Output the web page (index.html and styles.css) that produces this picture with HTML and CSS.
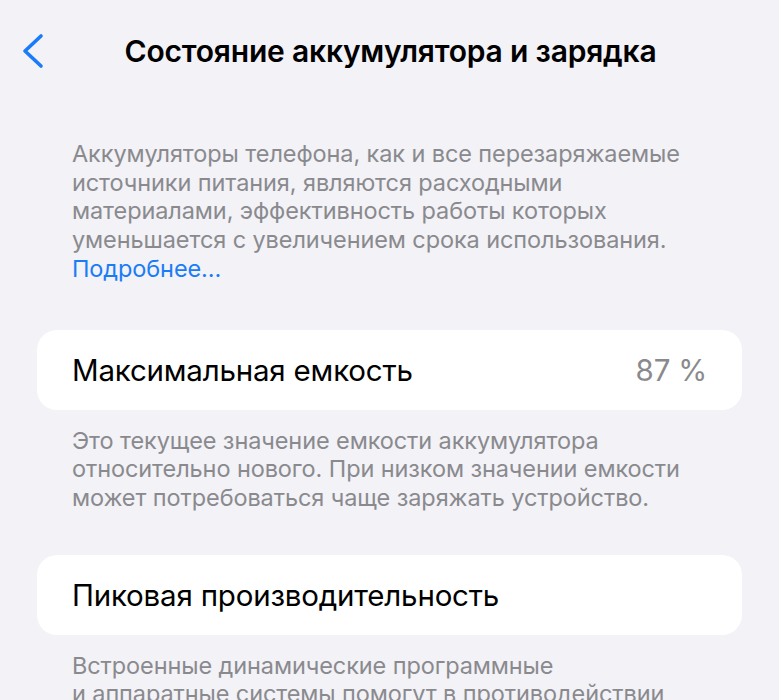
FILE: index.html
```html
<!DOCTYPE html>
<html lang="ru">
<head>
    <meta charset="UTF-8">
    <meta name="viewport" content="width=device-width, initial-scale=1.0">
    <title>Состояние аккумулятора и зарядка</title>
    <link rel="stylesheet" href="styles.css">
</head>
<body>
    <header class="nav-bar">
        <a class="back-button" href="#" aria-label="Назад">
            <svg width="24" height="36" viewBox="0 0 24 36">
                <path d="M20 3 L4 18 L20 33" fill="none" stroke="#1a7cf6" stroke-width="3.6" stroke-linecap="round" stroke-linejoin="round"/>
            </svg>
        </a>
        <h1 class="nav-title">Состояние аккумулятора и зарядка</h1>
    </header>

    <main class="settings">
        <p class="section-note intro">
            Аккумуляторы телефона, как и все перезаряжаемые<br>
            источники питания, являются расходными<br>
            материалами, эффективность работы которых<br>
            уменьшается с увеличением срока использования.<br>
            <a href="#" class="more-link">Подробнее…</a>
        </p>

        <div class="settings-group">
            <div class="settings-row">
                <span class="row-label">Максимальная емкость</span>
                <span class="row-value">87 %</span>
            </div>
        </div>
        <p class="section-note">
            Это текущее значение емкости аккумулятора<br>
            относительно нового. При низком значении емкости<br>
            может потребоваться чаще заряжать устройство.
        </p>

        <div class="settings-group">
            <div class="settings-row">
                <span class="row-label">Пиковая производительность</span>
            </div>
        </div>
        <p class="section-note">
            Встроенные динамические программные<br>
            и аппаратные системы помогут в противодействии<br>
            влиянию износа аккумулятора на производительность.
        </p>
    </main>
</body>
</html>
```

FILE: styles.css
```css
html, body {
    margin: 0;
    padding: 0;
}
body {
    background: #f2f2f7;
    font-family: Inter, "Noto Sans", sans-serif;
    color: #000;
    overflow: hidden;
}

/* top navigation */
.nav-bar {
    position: relative;
    height: 102px;
    display: flex;
    align-items: center;
    justify-content: center;
}
.back-button {
    position: absolute;
    left: 21px;
    top: 33px;
    display: block;
    width: 24px;
    height: 36px;
}
.back-button svg {
    display: block;
}
.nav-title {
    margin: 0;
    font-size: 30px;
    font-weight: 600;
    letter-spacing: -0.2px;
    padding-left: 2px;
}

/* content */
.settings {
    padding: 0 37px;
}
.section-note {
    margin: 0;
    padding: 0 35px;
    font-size: 23.5px;
    line-height: 28.7px;
    color: #8a8a8e;
    letter-spacing: -0.1px;
    white-space: nowrap;
}
.intro {
    padding-top: 38px;
    padding-bottom: 46px;
}
.more-link {
    color: #1a7cf6;
    text-decoration: none;
}
.settings-group {
    background: #fff;
    border-radius: 20px;
}
.settings-row {
    height: 80px;
    padding: 0 35px;
    display: flex;
    align-items: center;
    justify-content: space-between;
    font-size: 29.5px;
    letter-spacing: -0.2px;
}
.row-value {
    color: #8a8a8e;
}
.settings-group + .section-note {
    padding-top: 17px;
    padding-bottom: 42px;
}
```
